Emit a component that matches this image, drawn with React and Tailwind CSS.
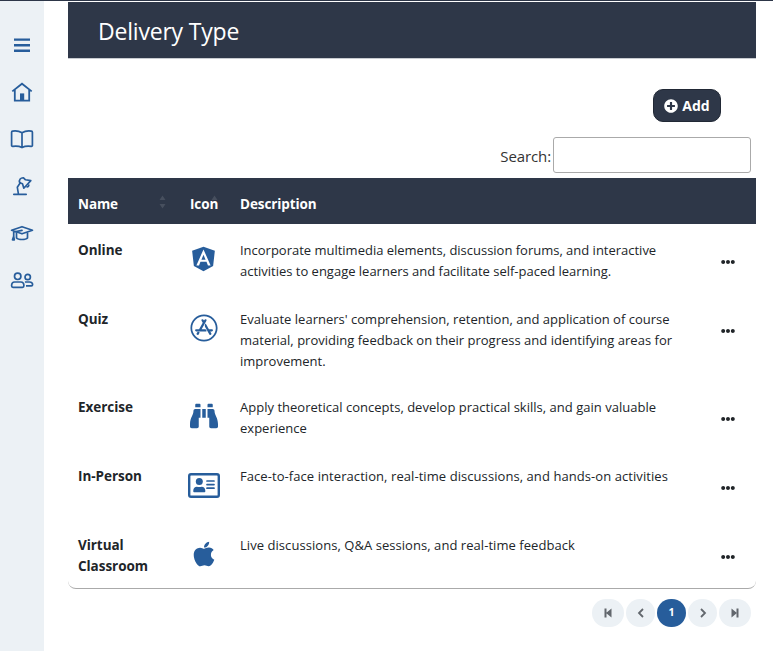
import {
  FaAngular,
  FaAppStore,
  FaApple,
  FaBinoculars,
  FaEllipsisH,
  FaPlusCircle,
} from "react-icons/fa";

function MenuIcon() {
  return (
    <svg width="24" height="24" viewBox="0 0 24 24" fill="none" stroke="currentColor" strokeWidth="2.400">
      <path d="M4 6.600h16M4 12.200h16M4 17.800h16" />
    </svg>
  );
}

function HomeIcon() {
  return (
    <svg width="24" height="24" viewBox="0 0 24 24" fill="none" stroke="currentColor" strokeWidth="1.800">
      <path d="M2.300 11.400 12 3.700l9.700 7.700" />
      <path d="M4.800 10v10.600h14.400V10" />
      <path d="M10 20.600v-7.200h4.200v7.200z" fill="currentColor" stroke="none" />
    </svg>
  );
}

function BookIcon() {
  return (
    <svg width="24" height="24" viewBox="0 0 24 24" fill="none" stroke="currentColor" strokeWidth="1.700" strokeLinejoin="round">
      <path d="M12 5.700C9.600 4.300 5.600 3.700 2.700 4.100 2 4.200 1.600 4.600 1.600 5.200v13.200c0 .7.500 1.100 1.200 1 3-.4 6.700-.1 9.200 1.200 2.500-1.300 6.200-1.600 9.200-1.200.7.100 1.200-.3 1.200-1V5.200c0-.6-.4-1-1.100-1.100C18.400 3.700 14.400 4.300 12 5.700Zv14.800" />
    </svg>
  );
}

function LampIcon() {
  return (
    <svg width="24" height="24" viewBox="0 0 24 24" fill="none" stroke="currentColor" strokeWidth="1.650" strokeLinecap="round" strokeLinejoin="round">
      <path d="M3.800 20.400h12.400M8.500 20.300 7.300 13.200l3-4.400" />
      <path d="M9.700 8.800C8.600 5.600 10.800 3.600 13.500 3.800l2 2 5.300.8-7 7.600-1.300-4.400z" />
      <path d="M17 12.800c1 .2 1.900-.6 1.800-1.700" />
    </svg>
  );
}

function CapIcon() {
  return (
    <svg width="24" height="24" viewBox="0 0 24 24" fill="none" stroke="currentColor" strokeWidth="1.700" strokeLinecap="round" strokeLinejoin="round">
      <path d="M1.600 9.300 12 5.700l10.500 3.600L12 12.800z" />
      <path d="M12 9.300 3.700 11v4.500M3.700 15.300l-1.200 3.500h1.800z" />
      <path d="M6.500 12v5c1.700 2 9.300 2 11 0v-5" />
    </svg>
  );
}

function UsersIcon() {
  return (
    <svg width="24" height="24" viewBox="0 0 24 24" fill="none" stroke="currentColor" strokeWidth="1.700" strokeLinejoin="round">
      <circle cx="7.700" cy="8.300" r="3.200" />
      <path d="M4.600 14h6.300c2 0 3 1.500 3 3.800 0 1-.5 1.500-1.400 1.500H3c-.9 0-1.400-.5-1.400-1.500 0-2.300 1-3.800 3-3.800Z" />
      <circle cx="17.700" cy="9" r="2.700" />
      <path d="M14.900 14h4.700c2 0 3 1.200 3 2.700 0 .8-.5 1.200-1.300 1.200H16" />
    </svg>
  );
}

function AddressCardIcon() {
  return (
    <svg width="32" height="28" viewBox="0 0 32 28" fill="currentColor">
      <rect x="1.200" y="3.200" width="29.600" height="22.600" rx="1.800" fill="none" stroke="currentColor" strokeWidth="2.400" />
      <circle cx="11.300" cy="10.600" r="3.500" />
      <path d="M5.300 20.500v-1c0-2.300 1.600-3.800 3.600-3.800.8 0 1.400.4 2.400.4s1.600-.4 2.400-.4c2 0 3.600 1.500 3.600 3.800v1c0 .4-.3.700-.7.700H6c-.4 0-.7-.3-.7-.7Z" />
      <path d="M19 10h7M19 13.600h7M19 17.200h7" stroke="currentColor" strokeWidth="1.700" strokeLinecap="round" />
    </svg>
  );
}

const navItems = [MenuIcon, HomeIcon, BookIcon, LampIcon, CapIcon, UsersIcon];

const rows = [
  {
    name: ["Online"],
    icon: <FaAngular className="h-[28px] w-[27px]" />,
    height: "h-[69px]",
    tracking: "tracking-[-0.01px]",
    lines: [
      "Incorporate multimedia elements, discussion forums, and interactive",
      "activities to engage learners and facilitate self-paced learning.",
    ],
  },
  {
    name: ["Quiz"],
    icon: <FaAppStore className="size-[28px]" />,
    height: "h-[88px]",
    tracking: "tracking-[0.01px]",
    lines: [
      "Evaluate learners' comprehension, retention, and application of course",
      "material, providing feedback on their progress and identifying areas for",
      "improvement.",
    ],
  },
  {
    name: ["Exercise"],
    icon: <FaBinoculars className="size-[28px]" />,
    height: "h-[69px]",
    tracking: "tracking-[0.015px]",
    lines: [
      "Apply theoretical concepts, develop practical skills, and gain valuable",
      "experience",
    ],
  },
  {
    name: ["In-Person"],
    icon: <AddressCardIcon />,
    height: "h-[69px]",
    tracking: "tracking-[0.07px]",
    lines: ["Face-to-face interaction, real-time discussions, and hands-on activities"],
  },
  {
    name: ["Virtual", "Classroom"],
    icon: <FaApple className="h-[28px] w-[22px]" />,
    height: "h-[69px]",
    tracking: "tracking-[0.055px]",
    lines: ["Live discussions, Q&A sessions, and real-time feedback"],
  },
];

function SortArrows() {
  return (
    <svg width="7" height="14" viewBox="0 0 7 14" fill="#474f5e">
      <path d="M0.500 5 3.500 0.500l3 4.500zM0.500 9l3 4.500 3-4.500z" />
    </svg>
  );
}

function PageButton({ children, className }) {
  return (
    <button className={`flex h-[28px] items-center justify-center rounded-full ${className}`}>
      {children}
    </button>
  );
}

export default function App() {
  return (
    <div className="flex h-[651px] w-[773px] flex-col overflow-hidden bg-white font-['Open_Sans','Noto_Sans',sans-serif] text-[#212529]">
      <div className="h-px shrink-0 bg-[#2d3648]" />
      <div className="flex min-h-0 flex-1">
        <nav className="flex w-[44px] shrink-0 flex-col items-center gap-[23px] bg-[#ecf1f5] pt-[32px] text-[#275d9b]">
          {navItems.map((Icon, i) => (
            <a key={i} className="block size-6">
              <Icon />
            </a>
          ))}
        </nav>
        <main className="ml-6 flex w-[688px] flex-col">
          <header className="mt-px flex h-[57px] shrink-0 items-center border-b border-[#c8cbd0] bg-[#2e3748] pt-[2px] pl-[30px]">
            <h1 className="text-[23px] leading-[36px] tracking-[-0.2px] text-white">Delivery Type</h1>
          </header>
          <div className="mt-[30px] flex justify-end pr-[35px]">
            <button className="flex h-[33px] w-[68px] items-center justify-center gap-1 rounded-[10px] border border-[#212835] bg-[#2e3748] text-[14px] font-bold text-white">
              <FaPlusCircle className="size-[14px]" />
              <span>Add</span>
            </button>
          </div>
          <label className="mt-[15px] flex items-center justify-end gap-[2px] pr-[5px] text-[15px] tracking-[-0.1px] text-[#333]">
            <span className="pt-[2px]">Search:</span>
            <input className="h-[36px] w-[198px] rounded-[3px] border border-[#aaa] bg-white" />
          </label>
          <section className="mt-[5px] h-[411px] rounded-b-lg border-b border-[#aaa] text-[13px] leading-[21px]">
            <div className="flex h-[46px] items-center bg-[#2e3748] pt-[7px] text-[13.5px] font-bold tracking-[-0.1px] text-white">
              <div className="flex w-[112px] items-center justify-between pl-[10px] pr-[14px]">
                <span>Name</span>
                <span className="-mt-[6px]"><SortArrows /></span>
              </div>
              <div className="relative w-[60px] pl-[10px]">
                <span>Icon</span>
                <svg className="absolute top-px left-[31px]" width="7" height="5" viewBox="0 0 7 5" fill="#474f5e">
                  <path d="M0.500 5 3.500 0.500l3 4.500z" />
                </svg>
              </div>
              <div>Description</div>
            </div>
            {rows.map((row) => (
              <div key={row.name[0]} className={`flex ${row.height}`}>
                <div className="w-[112px] pl-[10px] pt-[16px] text-[13.5px] font-bold tracking-[-0.05px]">
                  {row.name.map((line) => (
                    <div key={line}>{line}</div>
                  ))}
                </div>
                <div className="flex w-[47px] justify-center pt-[20.5px] text-[#275d9b]">{row.icon}</div>
                <div className={`w-[480px] pl-[13px] pt-[16px] whitespace-nowrap ${row.tracking}`}>
                  {row.lines.map((line) => (
                    <div key={line}><span>{line}</span></div>
                  ))}
                </div>
                <div className="pl-[14px] pt-[31px]">
                  <FaEllipsisH className="size-[14px]" />
                </div>
              </div>
            ))}
          </section>
          <div className="mt-[10px] flex justify-end gap-[2px] pr-[5px] text-[#62676d]">
            <PageButton className="w-[32px] bg-[#ecf1f5]">
              <svg width="8" height="10" viewBox="0 0 8 10" fill="currentColor">
                <path d="M0.500 0.500h2v9h-2zM7.500 0.500v9L2 5z" />
              </svg>
            </PageButton>
            <PageButton className="w-[29px] bg-[#ecf1f5]">
              <svg width="8" height="10" viewBox="0 0 8 10" fill="none" stroke="currentColor" strokeWidth="1.800">
                <path d="M6 1 2 5l4 4" />
              </svg>
            </PageButton>
            <PageButton className="w-[29px] bg-[#275d9b] text-[10.5px] font-bold text-white">1</PageButton>
            <PageButton className="w-[29px] bg-[#ecf1f5]">
              <svg width="8" height="10" viewBox="0 0 8 10" fill="none" stroke="currentColor" strokeWidth="1.800">
                <path d="m2 1 4 4-4 4" />
              </svg>
            </PageButton>
            <PageButton className="w-[32px] bg-[#ecf1f5]">
              <svg width="8" height="10" viewBox="0 0 8 10" fill="currentColor">
                <path d="M5.500 0.500h2v9h-2zM0.500 0.500v9L6 5z" />
              </svg>
            </PageButton>
          </div>
        </main>
      </div>
    </div>
  );
}
